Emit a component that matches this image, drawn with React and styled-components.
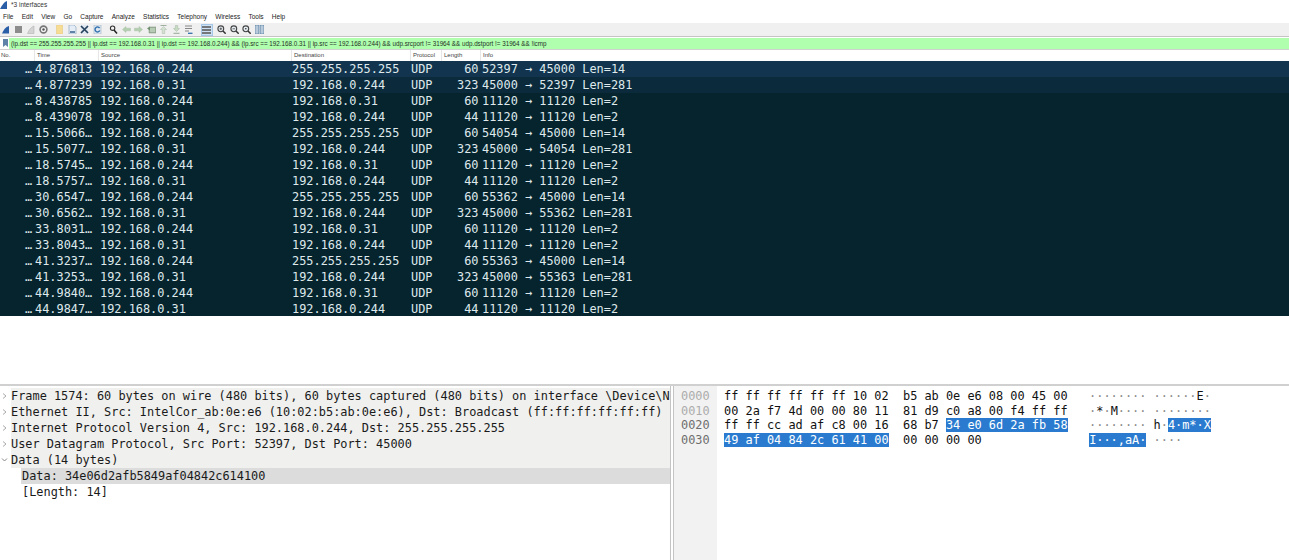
import React from "react";
import styled, { createGlobalStyle } from "styled-components";

const GlobalStyle = createGlobalStyle`
  html, body { margin: 0; padding: 0; background: #fff; }
  body { width: 1289px; height: 560px; overflow: hidden; }
`;

const mono = `"DejaVu Sans Mono", "Liberation Mono", monospace`;
const sans = `"Liberation Sans", Arial, sans-serif`;

const Page = styled.div`
  position: relative;
  width: 1289px;
  height: 560px;
  display: flex;
  flex-direction: column;
  overflow: hidden;
`;

const TitleBar = styled.div`
  height: 9px;
  display: flex;
  align-items: center;
  gap: 3px;
  font: 6.5px ${sans};
  color: #333;
`;

const MenuBar = styled.div`
  height: 14px;
  display: flex;
  align-items: center;
  padding-left: 3px;
  gap: 8.25px;
  font: 6.5px ${sans};
  color: #222;
`;

const Toolbar = styled.div`
  height: 13px;
  background: #f0f0f0;
  border-bottom: 1px solid #c4c4c4;
  display: flex;
  align-items: center;
  padding-left: 1px;
  gap: 3.5px;
`;

const ToolIcon = styled.svg`
  width: 9px;
  height: 9px;
  flex: none;
  margin-left: ${(p) => p.$space || 0}px;
`;

const ToolToggle = styled.span`
  width: 12px;
  height: 12px;
  margin-left: 4px;
  margin-right: 1px;
  display: flex;
  align-items: center;
  justify-content: center;
  background: #cfe2f5;
  border: 1px solid #a6c8e6;
  box-sizing: border-box;
`;

const FilterRow = styled.div`
  height: 12px;
  display: flex;
  align-items: center;
  background: #fff;
  border-bottom: 1px solid #d0d0d0;
`;

const FilterInput = styled.div`
  flex: 1;
  height: 11px;
  margin-left: 9px;
  padding-left: 2px;
  background: #afffaf;
  font: 6.27px/11px ${sans};
  color: #1f2f1f;
  white-space: nowrap;
`;

const Bookmark = styled.svg`
  position: absolute;
  left: 3px;
  top: 39px;
  width: 5px;
  height: 8px;
`;

const Columns = styled.div`
  display: grid;
  grid-template-columns: 34px 64px 193px 119px 31px 39px 1fr;
  height: 11px;
  background: #fff;
  font: 6px/11px ${sans};
  color: #444;
`;

const ColumnHead = styled.div`
  padding-left: 2px;
  border-left: 1px solid #e6e6e6;
  overflow: hidden;

  &:first-child {
    border-left: 0;
    padding-left: 1px;
  }
`;

const List = styled.div`
  height: 255px;
  display: flex;
  flex-direction: column;
`;

const Row = styled.div`
  height: 16px;
  flex: none;
  display: grid;
  grid-template-columns: 35px 65px 192px 119px 46px 21.5px 1fr;
  background: ${(p) => p.$bg};
  color: #dfe9ec;
  font: 11.9px/16px ${mono};
  white-space: pre;
`;

const NoCell = styled.span`
  padding-left: 25px;
`;

const LenCell = styled.span`
  text-align: right;
`;

const Info = styled.span`
  padding-left: 3.5px;
`;

const Gap = styled.div`
  height: 68px;
  background: #fff;
  border-bottom: 2px solid #d0d0d0;
`;

const Panes = styled.div`
  flex: 1;
  display: flex;
  min-height: 0;
`;

const TreePane = styled.div`
  width: 670px;
  flex: none;
  padding-top: 2px;
  font: 11.9px/16px ${mono};
  color: #1a1a1a;
  background: #fff;
`;

const TreeRow = styled.div`
  height: 16px;
  display: flex;
  align-items: center;
  white-space: pre;
  overflow: hidden;
  background: ${(p) => (p.$tint ? "#f0f0ee" : "transparent")};
  margin-left: 11px;
`;

const Arrow = styled.svg`
  position: absolute;
  left: 0;
  width: 10px;
  height: 16px;
`;

const DataRow = styled.div`
  height: 16px;
  margin-left: 21px;
  padding-left: 1px;
  white-space: pre;
  background: ${(p) => (p.$selected ? "#dcdcdc" : "transparent")};
`;

const Divider = styled.div`
  width: 4px;
  flex: none;
  background: #fff;
  border-left: 1px solid #c4c4c4;
  border-right: 1px solid #c4c4c4;
  box-sizing: border-box;
`;

const HexPane = styled.div`
  flex: 1;
  display: flex;
  font: 11.9px/14.7px ${mono};
`;

const Offsets = styled.div`
  width: 43px;
  flex: none;
  background: #f2f2f2;
  padding: 3px 0 0 7px;
  box-sizing: border-box;
`;

const Offset = styled.div`
  height: 14.7px;
  color: ${(p) => (p.$dim ? "#acacac" : "#6e6e6e")};
`;

const HexBody = styled.div`
  padding: 3px 0 0 7px;
  color: #111;
`;

const HexLine = styled.div`
  height: 14.7px;
  white-space: pre;
`;

const Mark = styled.span`
  background: #2a7bd0;
  color: #fff;
`;

const Dim = styled.span`
  color: #8a8a8a;
`;

const Doc = ({ $space, children }) => (
  <ToolIcon viewBox="0 0 9 9" $space={$space}>{children}</ToolIcon>
);

const Magnifier = ({ sign, space }) => (
  <Doc $space={space}>
    <circle cx="3.8" cy="3.8" r="2.9" fill="#e6edf2" stroke="#444" strokeWidth="1.1" />
    <path d="M6 6L8.7 8.7" stroke="#333" strokeWidth="1.5" />
    {sign}
  </Doc>
);

const rows = [
  ["4.876813", "192.168.0.244", "255.255.255.255", "60", "52397 → 45000", "Len=14", "#12344f"],
  ["4.877239", "192.168.0.31", "192.168.0.244", "323", "45000 → 52397", "Len=281", "#0b2a3c"],
  ["8.438785", "192.168.0.244", "192.168.0.31", "60", "11120 → 11120", "Len=2", "#06242e"],
  ["8.439078", "192.168.0.31", "192.168.0.244", "44", "11120 → 11120", "Len=2", "#06242e"],
  ["15.5066…", "192.168.0.244", "255.255.255.255", "60", "54054 → 45000", "Len=14", "#06242e"],
  ["15.5077…", "192.168.0.31", "192.168.0.244", "323", "45000 → 54054", "Len=281", "#06242e"],
  ["18.5745…", "192.168.0.244", "192.168.0.31", "60", "11120 → 11120", "Len=2", "#06242e"],
  ["18.5757…", "192.168.0.31", "192.168.0.244", "44", "11120 → 11120", "Len=2", "#06242e"],
  ["30.6547…", "192.168.0.244", "255.255.255.255", "60", "55362 → 45000", "Len=14", "#06242e"],
  ["30.6562…", "192.168.0.31", "192.168.0.244", "323", "45000 → 55362", "Len=281", "#06242e"],
  ["33.8031…", "192.168.0.244", "192.168.0.31", "60", "11120 → 11120", "Len=2", "#06242e"],
  ["33.8043…", "192.168.0.31", "192.168.0.244", "44", "11120 → 11120", "Len=2", "#06242e"],
  ["41.3237…", "192.168.0.244", "255.255.255.255", "60", "55363 → 45000", "Len=14", "#06242e"],
  ["41.3253…", "192.168.0.31", "192.168.0.244", "323", "45000 → 55363", "Len=281", "#06242e"],
  ["44.9840…", "192.168.0.244", "192.168.0.31", "60", "11120 → 11120", "Len=2", "#06242e"],
  ["44.9847…", "192.168.0.31", "192.168.0.244", "44", "11120 → 11120", "Len=2", "#06242e"],
];

const menus = ["File", "Edit", "View", "Go", "Capture", "Analyze", "Statistics", "Telephony", "Wireless", "Tools", "Help"];

const tree = [
  "Frame 1574: 60 bytes on wire (480 bits), 60 bytes captured (480 bits) on interface \\Device\\N",
  "Ethernet II, Src: IntelCor_ab:0e:e6 (10:02:b5:ab:0e:e6), Dst: Broadcast (ff:ff:ff:ff:ff:ff)",
  "Internet Protocol Version 4, Src: 192.168.0.244, Dst: 255.255.255.255",
  "User Datagram Protocol, Src Port: 52397, Dst Port: 45000",
];

const App = () => (
  <Page>
    <GlobalStyle />
    <TitleBar>
      <svg width="8" height="8" viewBox="0 0 8 8"><path d="M0 8C2 4 4 1 7 0V8Z" fill="#2a5fa8" /></svg>
      <span>*3 interfaces</span>
    </TitleBar>
    <MenuBar>
      {menus.map((m) => <span key={m}>{m}</span>)}
    </MenuBar>
    <Toolbar>
      <Doc><path d="M1 8.5C2.5 5 4.5 2 8 1V8.5Z" fill="#2a5fa8" /></Doc>
      <Doc><path d="M1 1H8V8H1Z" fill="#8c8c8c" /></Doc>
      <Doc><path d="M1.5 8.5C3 5 5 2 8 1V8.5Z" fill="#d4d4d4" stroke="#aaa" strokeWidth="0.5" /></Doc>
      <Doc>
        <circle cx="4.5" cy="4.5" r="3.4" fill="none" stroke="#777" strokeWidth="1.6" />
        <circle cx="4.5" cy="4.5" r="1.2" fill="#555" />
      </Doc>
      <Doc $space={4}><path d="M1.5 0H7.5V9H1.5Z" fill="#f7dc94" stroke="#e4c575" strokeWidth="0.5" /></Doc>
      <Doc>
        <path d="M1 0H6L8 2V9H1Z" fill="#e4edf5" stroke="#7f9cba" strokeWidth="0.6" />
        <path d="M2 6H7V8H2Z" fill="#5f83a8" />
      </Doc>
      <Doc>
        <path d="M1 0H8V9H1Z" fill="#dfe8f0" />
        <path d="M1 1L8 8M8 1L1 8" stroke="#27425e" strokeWidth="1.7" />
      </Doc>
      <Doc>
        <path d="M1 0H8V9H1Z" fill="#dfe8f0" stroke="#8fa8c0" strokeWidth="0.5" />
        <path d="M6.6 3A2.5 2.5 0 1 0 6.8 5.5" fill="none" stroke="#2f6fae" strokeWidth="1.4" />
      </Doc>
      <Doc $space={4}>
        <circle cx="3.6" cy="3.2" r="2.2" fill="#f4f4f4" stroke="#333" strokeWidth="1.1" />
        <path d="M5 5L8 8.5" stroke="#222" strokeWidth="1.5" />
      </Doc>
      <Doc><path d="M0.5 4.5L4 1.5V3.2H8.5V5.8H4V7.5Z" fill="#b4cfb0" stroke="#9cb89a" strokeWidth="0.4" /></Doc>
      <Doc><path d="M8.5 4.5L5 1.5V3.2H0.5V5.8H5V7.5Z" fill="#b4cfb0" stroke="#9cb89a" strokeWidth="0.4" /></Doc>
      <Doc>
        <path d="M2 2H9V8H2Z" fill="#9db79a" stroke="#7c8f7c" strokeWidth="0.5" />
        <path d="M0 3.5L3 1.5V5.5Z" fill="#6f8f6f" />
        <path d="M3 4H8M3 6H8" stroke="#e8efe8" strokeWidth="0.7" />
      </Doc>
      <Doc>
        <path d="M1.5 0.5H7.5" stroke="#8aa08a" strokeWidth="0.8" />
        <path d="M4.5 1.5L7.5 4.5H5.7V8.5H3.3V4.5H1.5Z" fill="#d4e2d2" stroke="#a6b8a6" strokeWidth="0.5" />
      </Doc>
      <Doc>
        <path d="M4.5 6.5L7.5 3.5H5.7V0.5H3.3V3.5H1.5Z" fill="#c8dcc4" stroke="#a0b6a0" strokeWidth="0.5" />
        <path d="M1.5 8.3H7.5" stroke="#8aa08a" strokeWidth="0.9" />
      </Doc>
      <Doc>
        <path d="M1 1H8M1 3.5H8M1 6H5" stroke="#7c7c7c" strokeWidth="0.9" />
        <path d="M4 8.3H8.5" stroke="#2f6fae" strokeWidth="1.3" />
      </Doc>
      <ToolToggle>
        <ToolIcon viewBox="0 0 9 9"><path d="M0 1H9V3H0ZM0 4H9V6H0ZM0 7H9V9H0Z" fill="#75787a" /></ToolIcon>
      </ToolToggle>
      <Magnifier sign={<path d="M2.5 3.8H5.1M3.8 2.5V5.1" stroke="#333" strokeWidth="0.7" />} />
      <Magnifier sign={<path d="M2.5 3.8H5.1" stroke="#333" strokeWidth="0.7" />} />
      <Magnifier sign={<circle cx="3.8" cy="3.8" r="0.8" fill="#333" />} />
      <Doc><path d="M0 0H3.8V9H0ZM5.2 0H9V9H5.2Z" fill="#b9cbdb" stroke="#3f6f9a" strokeWidth="0.6" /></Doc>
    </Toolbar>
    <FilterRow>
      <Bookmark viewBox="0 0 5 8"><path d="M0 0H5V8L2.5 6L0 8Z" fill="#5f83a8" /></Bookmark>
      <FilterInput>(ip.dst == 255.255.255.255 || ip.dst == 192.168.0.31 || ip.dst == 192.168.0.244) &amp;&amp; (ip.src == 192.168.0.31 || ip.src == 192.168.0.244) &amp;&amp; udp.srcport != 31964 &amp;&amp; udp.dstport != 31964 &amp;&amp; !icmp</FilterInput>
    </FilterRow>
    <Columns>
      {["No.", "Time", "Source", "Destination", "Protocol", "Length", "Info"].map((h) => (
        <ColumnHead key={h}>{h}</ColumnHead>
      ))}
    </Columns>
    <List>
      {rows.map((r, i) => (
        <Row key={i} $bg={r[6]}>
          <NoCell>…</NoCell>
          <span>{r[0]}</span>
          <span>{r[1]}</span>
          <span>{r[2]}</span>
          <span>UDP</span>
          <LenCell>{r[3]}</LenCell>
          <Info>{r[4]} {r[5]}</Info>
        </Row>
      ))}
    </List>
    <Gap />
    <Panes>
      <TreePane>
        {tree.map((t) => (
          <TreeRow key={t} $tint>
            <Arrow viewBox="0 0 10 16"><path d="M3 5.5L6 8L3 10.5" fill="none" stroke="#aaa" /></Arrow>
            {t}
          </TreeRow>
        ))}
        <TreeRow $tint>
          <Arrow viewBox="0 0 10 16"><path d="M2 6.5L4.5 9L7 6.5" fill="none" stroke="#888" /></Arrow>
          Data (14 bytes)
        </TreeRow>
        <DataRow $selected>Data: 34e06d2afb5849af04842c614100</DataRow>
        <DataRow>[Length: 14]</DataRow>
      </TreePane>
      <Divider />
      <HexPane>
        <Offsets>
          <Offset $dim>0000</Offset>
          <Offset $dim>0010</Offset>
          <Offset>0020</Offset>
          <Offset>0030</Offset>
        </Offsets>
        <HexBody>
          <HexLine>{"ff ff ff ff ff ff 10 02  b5 ab 0e e6 08 00 45 00   "}<Dim>{"········ ······"}</Dim>E<Dim>·</Dim></HexLine>
          <HexLine>{"00 2a f7 4d 00 00 80 11  81 d9 c0 a8 00 f4 ff ff   "}<Dim>·</Dim>*<Dim>·</Dim>M<Dim>{"···· ········"}</Dim></HexLine>
          <HexLine>{"ff ff cc ad af c8 00 16  68 b7 "}<Mark>34 e0 6d 2a fb 58</Mark>{"   "}<Dim>{"········ "}</Dim>h<Dim>·</Dim><Mark>{"4·m*·X"}</Mark></HexLine>
          <HexLine><Mark>49 af 04 84 2c 61 41 00</Mark>{"  00 00 00 00"}{"               "}<Mark>{"I···,aA·"}</Mark> <Dim>····</Dim></HexLine>
        </HexBody>
      </HexPane>
    </Panes>
  </Page>
);

export default App;
